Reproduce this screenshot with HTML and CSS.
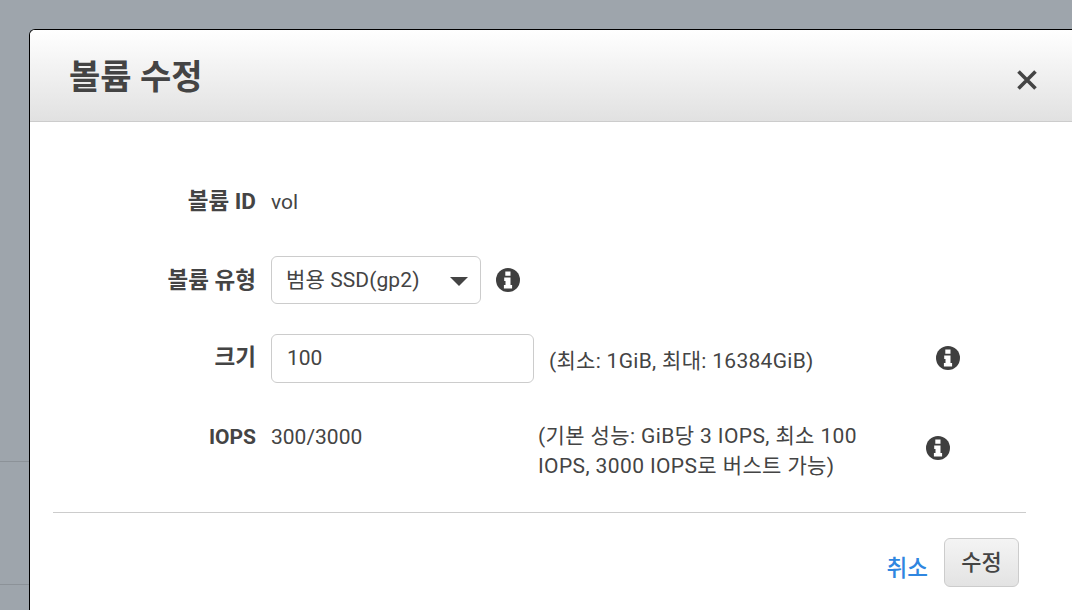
FILE: index.html
```html
<!DOCTYPE html>
<html lang="ko">
<head>
<meta charset="utf-8">
<title>볼륨 수정</title>
<link rel="stylesheet" href="styles.css">
</head>
<body>
<div class="backdrop">
  <div class="bg-row bg-row-first"></div>
  <div class="bg-row bg-row-last"></div>
</div>
<section class="modal">
  <header class="modal-head">
    <h1 class="modal-title">볼륨 수정</h1>
    <svg class="close" width="24" height="24" viewBox="0 0 24 24"><path d="M3.5 3.5 20.5 20.5M20.5 3.5 3.5 20.5" fill="none" stroke="#444" stroke-width="3.6"/></svg>
  </header>
  <div class="modal-body">
    <div class="row row-id">
      <div class="label">볼륨 ID</div>
      <div class="value">vol</div>
    </div>
    <div class="row row-type">
      <div class="label">볼륨 유형</div>
      <div class="select">범용 SSD(gp2)<span class="arrow"></span></div>
      <svg class="info info-type" viewBox="0 0 24 24"><use href="#i"/></svg>
    </div>
    <div class="row row-size">
      <div class="label">크기</div>
      <div class="input">100</div>
      <div class="hint">(최소: 1GiB, 최대: 16384GiB)</div>
      <svg class="info info-size" viewBox="0 0 24 24"><use href="#i"/></svg>
    </div>
    <div class="row row-iops">
      <div class="label label-latin">IOPS</div>
      <div class="value iops-val">300/3000</div>
      <div class="hint-long">(기본 성능: GiB당 3 IOPS, 최소 100 IOPS, 3000 IOPS로 버스트 가능)</div>
      <svg class="info info-iops" viewBox="0 0 24 24"><use href="#i"/></svg>
    </div>
    <div class="footer">
      <a class="cancel">취소</a>
      <button class="submit">수정</button>
    </div>
  </div>
</section>
<svg class="defs" width="0" height="0">
  <symbol id="i" viewBox="0 0 24 24">
    <circle cx="12" cy="12" r="12" fill="#3f3f3f"/>
    <path d="M9.3 3.6h5.2v4.1H9.3zM8.2 9.4h6.3v7.6h1.6v3.6H7.9V17h1.6v-4H8.2z" fill="#fff"/>
  </symbol>
</svg>
</body>
</html>
```
FILE: styles.css
```css
* { box-sizing: border-box; }
html, body { margin: 0; height: 100%; }
body {
  width: 1072px;
  height: 610px;
  overflow: hidden;
  background: #9ea5ac;
  font-family: Roboto, "Noto Sans CJK KR", sans-serif;
  font-size: 21px;
  color: #444;
  position: relative;
}
.backdrop { padding-top: 461px; }
.bg-row { border-top: 1px solid #8c9298; }
.bg-row-first { height: 123px; }
.bg-row-last { height: 26px; }
.defs { position: absolute; }

.modal {
  position: absolute;
  left: 29px;
  top: 29px;
  right: 0;
  bottom: 0;
  background: #fff;
  border-left: 1px solid #000;
  border-top: 1px solid #000;
  border-radius: 6px 0 0 0;
}
.modal-head {
  height: 92px;
  padding: 0 33px 0 39px;
  display: flex;
  align-items: center;
  justify-content: space-between;
  background: linear-gradient(#fff, #e1e1e1);
  border-bottom: 1px solid #ccc;
  border-radius: 5px 0 0 0;
}
.modal-title {
  margin: 2px 0 0;
  font-size: 34px;
  line-height: 40px;
  font-weight: 700;
  color: #444;
}
.close { margin-top: 8px; flex: none; }
.modal-body { width: 996px; margin-left: 23px; }

.row { display: flex; align-items: flex-start; }
.label {
  width: 203px;
  flex: none;
  text-align: right;
  font-size: 22.5px;
  font-weight: 700;
  line-height: 28px;
  color: #444;
}
.label-latin { font-size: 21px; }
.value { margin: 1px 0 0 15px; line-height: 28px; }
.row-id { padding-top: 65px; height: 134px; }
.row-type { height: 78px; align-items: center; padding-bottom: 30px; }
.select {
  position: relative;
  margin-left: 15px;
  width: 210px;
  height: 48px;
  border: 1px solid #ccc;
  border-radius: 6px;
  padding-left: 14px;
  line-height: 46px;
  letter-spacing: .1px;
}
.arrow {
  position: absolute;
  right: 12px;
  top: 20px;
  border-left: 9px solid transparent;
  border-right: 9px solid transparent;
  border-top: 9px solid #444;
}
.info { width: 24px; height: 24px; flex: none; }
.info-type { margin-left: 15px; }
.row-size { height: 90px; }
.row-size .label { margin-top: 9px; }
.input {
  margin-left: 15px;
  width: 263px;
  height: 49px;
  border: 1px solid #ccc;
  border-radius: 6px;
  padding-left: 15px;
  line-height: 46px;
  flex: none;
}
.hint { margin-left: 15px; width: 387px; line-height: 28px; padding-top: 13px; flex: none; letter-spacing: .3px; }
.info-size { margin-top: 12px; }
.row-iops { height: 88px; }
.row-iops .label, .iops-val { margin-top: -1px; }
.iops-val { width: 267px; flex: none; }
.hint-long { width: 335px; line-height: 30px; margin-top: -3px; flex: none; letter-spacing: .39px; }
.info-iops { margin-left: 53px; margin-top: 12px; }
.footer {
  border-top: 1px solid #ccc;
  width: 973px;
  display: flex;
  justify-content: flex-end;
  align-items: center;
  gap: 16px;
  padding: 25px 7px 0 0;
}
.cancel { color: #2f86e0; font-size: 22.5px; font-weight: 500; margin-top: 6px; }
.submit {
  width: 75px;
  height: 49px;
  border: 1px solid #ccc;
  border-radius: 6px;
  background: linear-gradient(#f4f4f4, #e3e3e3);
  font: 500 22px Roboto, "Noto Sans CJK KR", sans-serif;
  color: #444;
  padding: 0 0 6px;
}
```
